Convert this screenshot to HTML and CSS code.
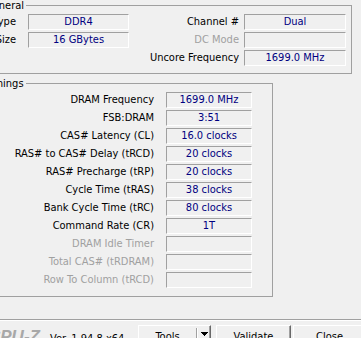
FILE: index.html
```html
<!DOCTYPE html>
<html>
<head>
<meta charset="utf-8">
<link rel="stylesheet" href="styles.css">
</head>
<body>
<div class="win">
  <fieldset class="group general">
    <legend>General</legend>
    <div class="grid-general">
      <span class="lbl c1">Type</span><span class="val">DDR4</span>
      <span class="lbl c3">Channel #</span><span class="val">Dual</span>
      <span class="lbl c1">Size</span><span class="val">16 GBytes</span>
      <span class="lbl c3 dis">DC Mode</span><span class="val"></span>
      <span class="lbl c1"></span><span class="blank"></span>
      <span class="lbl c3">Uncore Frequency</span><span class="val">1699.0 MHz</span>
    </div>
  </fieldset>
  <fieldset class="group timings">
    <legend>Timings</legend>
    <div class="grid-timings">
      <span class="lbl">DRAM Frequency</span><span class="val">1699.0 MHz</span>
      <span class="lbl">FSB:DRAM</span><span class="val">3:51</span>
      <span class="lbl">CAS# Latency (CL)</span><span class="val">16.0 clocks</span>
      <span class="lbl">RAS# to CAS# Delay (tRCD)</span><span class="val">20 clocks</span>
      <span class="lbl">RAS# Precharge (tRP)</span><span class="val">20 clocks</span>
      <span class="lbl">Cycle Time (tRAS)</span><span class="val">38 clocks</span>
      <span class="lbl">Bank Cycle Time (tRC)</span><span class="val">80 clocks</span>
      <span class="lbl">Command Rate (CR)</span><span class="val">1T</span>
      <span class="lbl dis">DRAM Idle Timer</span><span class="val"></span>
      <span class="lbl dis">Total CAS# (tRDRAM)</span><span class="val"></span>
      <span class="lbl dis">Row To Column (tRCD)</span><span class="val"></span>
    </div>
  </fieldset>
</div>
<div class="sep"></div>
<div class="footer">
  <div class="logo">CPU-Z</div>
  <div class="ver">Ver. 1.94.8.x64</div>
  <div class="btn tools">
    <span class="btn-label">Tools</span>
    <span class="dd"><svg width="7" height="4" viewBox="0 0 7 4" shape-rendering="crispEdges"><polygon points="0,0 7,0 3.5,4" fill="#000"/></svg></span>
  </div>
  <div class="btn validate">Validate</div>
  <div class="btn close">Close</div>
</div>
</body>
</html>
```
FILE: styles.css
```css
* { box-sizing: border-box; }
html, body { margin: 0; padding: 0; }
body {
  background: #f0f0f0;
  width: 361px;
  height: 338px;
  overflow: hidden;
  font-family: "DejaVu Sans Condensed", "DejaVu Sans", sans-serif;
  font-stretch: condensed;
  font-size: 11px;
  color: #000;
}
.win { margin-left: -26px; }
.group {
  margin: 0;
  min-width: 0;
  border: 1px solid #a0a0a0;
}
.group legend {
  padding: 0 2px;
  margin-left: 8px;
  line-height: 11px;
}
.general {
  width: 378px;
  padding: 3px 5px 7px 0;
}
.timings {
  width: 299px;
  margin-top: 4px;
  padding: 3px 20px 8px 0;
}
.grid-general {
  display: grid;
  grid-template-columns: 53px 101px 115px 102px;
  grid-auto-rows: 16px;
  row-gap: 2px;
}
.grid-timings {
  display: grid;
  grid-template-columns: 191px 86px;
  grid-auto-rows: 16px;
  row-gap: 2px;
}
.lbl {
  text-align: right;
  white-space: nowrap;
  line-height: 16px;
  padding-right: 12px;
}
.general .c3 { padding-right: 5px; }
.dis { color: #a0a0a0; }
.val {
  border: 1px solid;
  border-color: #a0a0a0 #fff #fff #a0a0a0;
  text-align: center;
  line-height: 14px;
  color: #000080;
  white-space: nowrap;
}
.sep {
  width: 361px;
  height: 2px;
  margin-top: 22px;
  border-top: 1px solid #a0a0a0;
  border-bottom: 1px solid #fff;
}
.footer {
  display: flex;
  align-items: flex-start;
  margin-top: 2px;
  height: 17px;
  width: 400px;
}
.logo {
  width: 62px;
  flex: none;
  margin-left: -12px;
  margin-top: 3px;
  font-family: "Liberation Sans", sans-serif;
  font-style: italic;
  font-weight: bold;
  font-size: 17px;
  line-height: 22px;
  color: #a8a8a8;
}
.ver {
  width: 88px;
  flex: none;
  margin-top: 9px;
  line-height: 13px;
  white-space: nowrap;
}
.btn {
  flex: none;
  height: 23px;
  margin-top: 2px;
  border: 1px solid;
  border-color: #fff #696969 #696969 #fff;
  box-shadow: inset -1px -1px 0 #a0a0a0;
  line-height: 21px;
  text-align: center;
  white-space: nowrap;
}
.tools {
  width: 73px;
  display: flex;
}
.btn-label {
  width: 57px;
  text-align: center;
}
.dd {
  width: 14px;
  margin-top: 2px;
  border-left: 1px solid #a0a0a0;
  box-shadow: inset 1px 0 0 #fff;
  display: flex;
  justify-content: center;
  align-items: flex-start;
  padding-top: 4px;
  padding-left: 1px;
}
.dd svg { display: block; }
.validate { width: 75px; margin-left: 5px; }
.close { width: 73px; margin-left: 2px; }
```
